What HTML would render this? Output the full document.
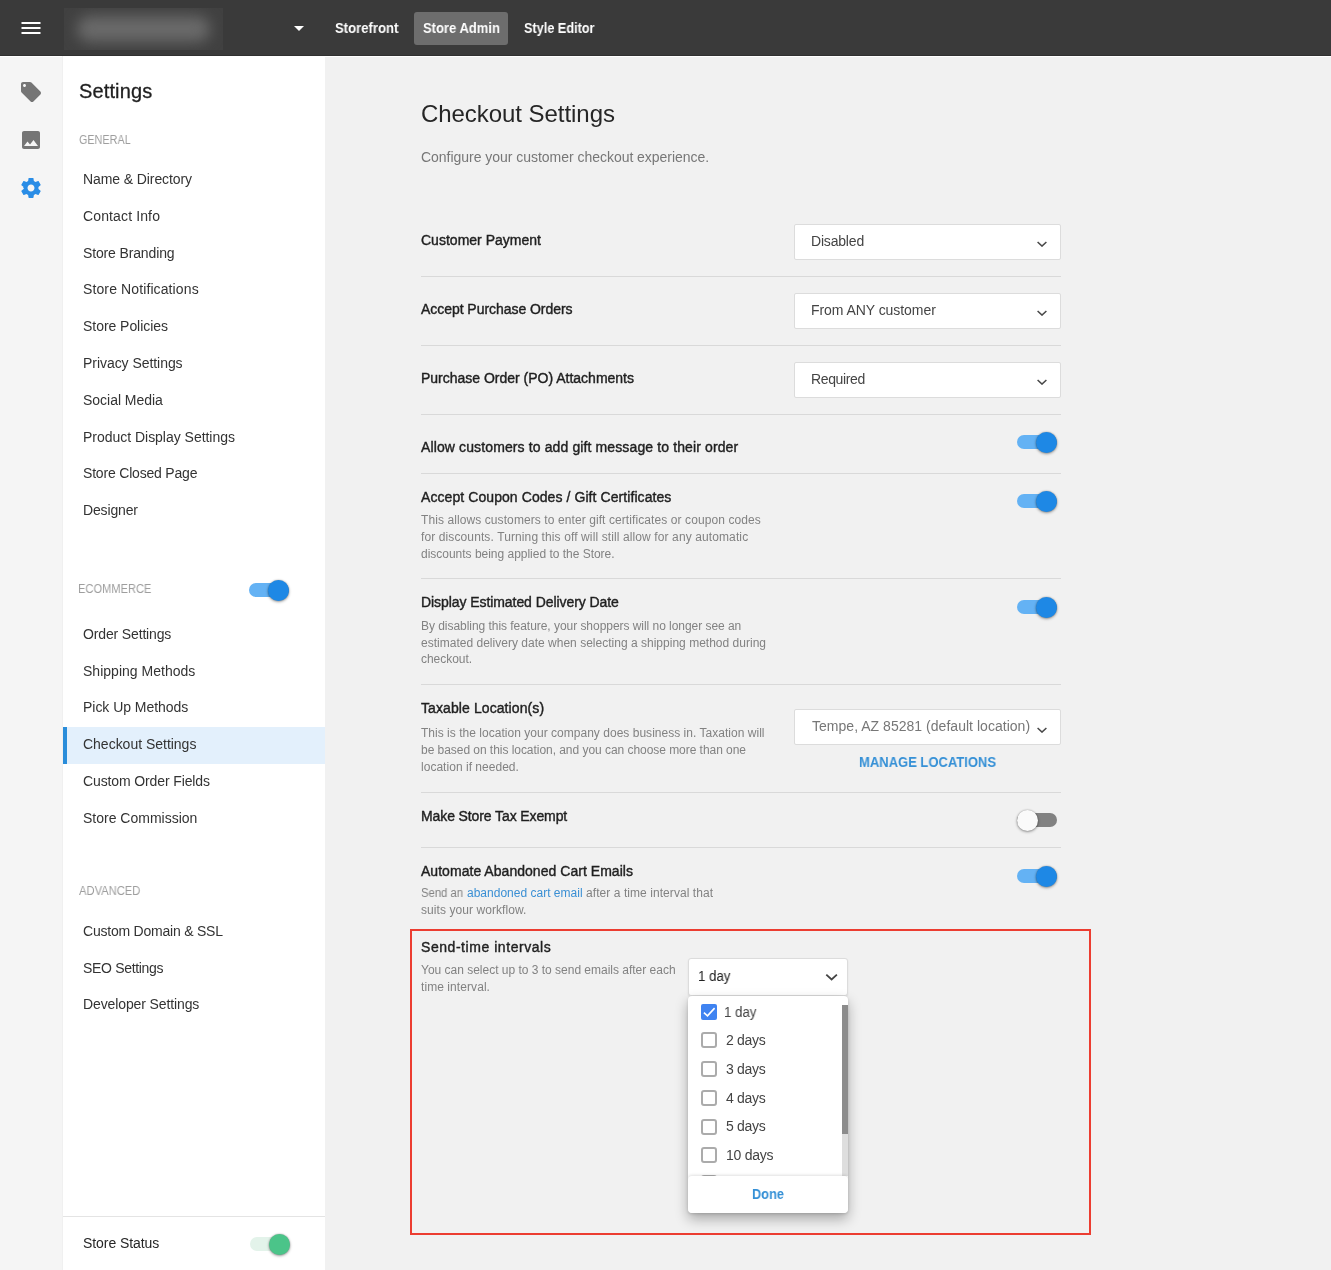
<!DOCTYPE html>
<html lang="en">
<head>
<meta charset="utf-8">
<title>Checkout Settings</title>
<style>
*{box-sizing:border-box;margin:0;padding:0}
html,body{width:1331px;height:1270px;overflow:hidden}
body{position:relative;background:#f1f1f1;font-family:"Liberation Sans",Arial,sans-serif;color:#333}
.abs{position:absolute}
.t{position:absolute;white-space:nowrap;line-height:1;display:block;transform-origin:0 50%;will-change:transform}
/* header */
#hdr{left:0;top:0;width:1331px;height:56px;background:linear-gradient(#3a3a3a 0,#3a3a3a 55px,#303030 55px,#303030 56px)}
#wline{left:0;top:56px;width:1331px;height:1px;background:#fff}
.hb{color:#fff;font-weight:bold}
#adminbtn{left:414px;top:12px;width:94px;height:33px;border-radius:3px;background:#6d6d6d}
#logo{left:64px;top:8px;width:159px;height:42px;background:#414141;overflow:hidden}
#logo i{position:absolute;left:13px;top:8px;width:133px;height:26px;border-radius:13px;background:#696969;filter:blur(7px)}
/* rail + sidebar */
#rail{left:0;top:57px;width:63px;height:1213px;background:#f5f5f5}
#side{left:62px;top:56px;width:263px;height:1214px;background:#fff;border-left:1px solid #f0f0f0}
#active{left:63px;top:727px;width:262px;height:37px;background:#e3f0fc;border-left:4px solid #2a8dda}
#sline{left:63px;top:1216px;width:262px;height:1px;background:#e4e4e4}
.st{color:#1f1f1f;-webkit-text-stroke:.3px #1f1f1f}
.sec{color:#9e9e9e}
.mi{color:#333}
.ss{color:#262626}
/* main */
.h1{color:#262626}
.sub{color:#777}
.lb{color:#1f1f1f;-webkit-text-stroke:.4px #1f1f1f}
.ds{color:#828282}
.ds.a{color:#3a8fd4}
.lnk{color:#3590d6;font-weight:bold}
.sv{color:#444}
.svg{color:#777}
.sv2{color:#222}
.op{color:#444}
.hr{position:absolute;left:421px;width:640px;height:1px;background:#d9d9d9}
.sel{position:absolute;left:794px;width:267px;height:36px;background:#fff;border:1px solid #dcdcdc;border-radius:2px}
.chev{position:absolute;width:10px;height:6px}
/* toggles */
.tg{position:absolute;width:40px;height:20px}
.tg b{position:absolute;left:0;top:3px;width:40px;height:14px;border-radius:7px;background:#64b2f4}
.tg i{position:absolute;left:19px;top:-.5px;width:21px;height:21px;border-radius:50%;background:#1e88e5;box-shadow:0 0 1.5px rgba(0,0,0,.3),0 1px 3px rgba(0,0,0,.38)}
.tg.off b{background:#828282}
.tg.off i{left:-.5px;background:#fafafa}
.tg.grn b{background:#e3f3ea}
.tg.grn i{background:#4bc489}
/* red box */
#red{left:410px;top:929px;width:681px;height:306px;border:2px solid #ec3d31}
/* dropdown */
#dsel{left:688px;top:958px;width:160px;height:38px;background:#fff;border:1px solid #dcdcdc;border-radius:3px;box-shadow:0 1px 2px rgba(0,0,0,.08)}
#panel{left:688px;top:996px;width:160px;height:217px;background:#fff;border-radius:4px;box-shadow:0 6px 13px rgba(0,0,0,.30),0 1px 3px rgba(0,0,0,.14);overflow:hidden}
#strack{left:154px;top:9px;width:6px;height:171px;background:#dedede}
#sthumb{left:154px;top:9px;width:6px;height:129px;background:#8c8c8c}
#pfoot{left:0;top:180px;width:160px;height:37px;background:#fff;border-radius:4px;box-shadow:0 -1px 3px rgba(0,0,0,.12)}
.cb{position:absolute;left:13px;width:16px;height:16px;border:2px solid #ababab;border-radius:3px;background:#fff}
.cb.on{border:none;background:#3f83f1;border-radius:2px}
</style>
</head>
<body>
<div class="abs" id="hdr"></div>
<div class="abs" id="logo"><i></i></div>
<svg class="abs" style="left:19px;top:16px" width="24" height="24" viewBox="0 0 24 24"><path fill="#fff" d="M2.500 5.900h19v2.200h-19zM2.500 10.900h19v2.200h-19zM2.500 15.900h19v2.200h-19z"/></svg>
<svg class="abs" style="left:286.5px;top:16px" width="24" height="24" viewBox="0 0 24 24"><path fill="#fff" d="M7 10l5 5 5-5z"/></svg>
<div class="abs" id="adminbtn"></div>

<div class="abs" id="wline"></div>
<div class="abs" id="rail"></div>
<svg class="abs" style="left:18.600px;top:80px" width="24" height="24" viewBox="0 0 24 24"><path fill="#757575" d="M21.41 11.58l-9-9C12.05 2.22 11.55 2 11 2H4c-1.1 0-2 .9-2 2v7c0 .55.22 1.05.59 1.42l9 9c.36.36.86.58 1.41.58.55 0 1.05-.22 1.41-.59l7-7c.37-.36.59-.86.59-1.41 0-.55-.23-1.06-.59-1.42zM5.5 7C4.67 7 4 6.33 4 5.500S4.67 4 5.5 4 7 4.67 7 5.500 6.330 7 5.500 7z"/></svg>
<svg class="abs" style="left:18.700px;top:128px" width="24" height="24" viewBox="0 0 24 24"><path fill="#757575" d="M21 19V5c0-1.1-.9-2-2-2H5c-1.1 0-2 .9-2 2v14c0 1.1.9 2 2 2h14c1.100 0 2-.9 2-2zM8.500 13.500l2.500 3.010L14.500 12l4.500 6H5l3.500-4.500z"/></svg>
<svg class="abs" style="left:18.600px;top:176px" width="24" height="24" viewBox="0 0 24 24"><path fill="#2a8de6" d="M19.430 12.980c.04-.32.070-.64.070-.98s-.03-.66-.07-.98l2.110-1.650c.19-.15.240-.42.120-.64l-2-3.460c-.12-.22-.39-.3-.61-.22l-2.490 1c-.52-.4-1.080-.73-1.690-.98l-.38-2.650C14.460 2.180 14.250 2 14 2h-4c-.25 0-.46.180-.49.420l-.38 2.650c-.61.250-1.170.59-1.690.98l-2.490-1c-.23-.09-.49 0-.61.220l-2 3.460c-.13.220-.07.490.12.640l2.110 1.650c-.4.320-.7.650-.07.980s.3.660.07.980l-2.110 1.650c-.19.150-.24.420-.12.640l2 3.460c.12.220.39.300.61.220l2.490-1c.52.400 1.080.730 1.690.980l.38 2.650c.3.240.24.420.49.420h4c.25 0 .46-.18.490-.42l.38-2.650c.61-.25 1.170-.59 1.690-.98l2.490 1c.23.090.49 0 .61-.22l2-3.460c.12-.22.070-.49-.12-.64l-2.110-1.650zM12 15.500c-1.930 0-3.500-1.570-3.500-3.500s1.570-3.500 3.500-3.500 3.500 1.570 3.500 3.500-1.570 3.500-3.500 3.500z"/></svg>

<div class="abs" id="side"></div>
<div class="abs" id="active"></div>
<div class="abs" id="sline"></div>
<div class="tg" style="left:249px;top:580px"><b></b><i></i></div>
<div class="tg grn" style="left:249.5px;top:1234px"><b></b><i></i></div>

<!-- main rows -->
<div class="sel" style="top:224px"></div>
<div class="sel" style="top:293px"></div>
<div class="sel" style="top:362px"></div>
<div class="sel" style="top:709px"></div>
<svg class="chev" style="left:1037px;top:241.400px" viewBox="0 0 10 6"><path d="M.6 1L5 5.100 9.400 1" fill="none" stroke="#484848" stroke-width="1.500"/></svg>
<svg class="chev" style="left:1037px;top:310.400px" viewBox="0 0 10 6"><path d="M.6 1L5 5.100 9.400 1" fill="none" stroke="#484848" stroke-width="1.500"/></svg>
<svg class="chev" style="left:1037px;top:379.400px" viewBox="0 0 10 6"><path d="M.6 1L5 5.100 9.400 1" fill="none" stroke="#484848" stroke-width="1.500"/></svg>
<svg class="chev" style="left:1037px;top:726.800px" viewBox="0 0 10 6"><path d="M.6 1L5 5.100 9.400 1" fill="none" stroke="#484848" stroke-width="1.500"/></svg>

<div class="hr" style="top:276px"></div>
<div class="hr" style="top:345px"></div>
<div class="hr" style="top:414px"></div>
<div class="hr" style="top:473px"></div>
<div class="hr" style="top:578px"></div>
<div class="hr" style="top:684px"></div>
<div class="hr" style="top:792px"></div>
<div class="hr" style="top:847px"></div>

<div class="tg" style="left:1017px;top:432px"><b></b><i></i></div>
<div class="tg" style="left:1017px;top:491px"><b></b><i></i></div>
<div class="tg" style="left:1017px;top:597px"><b></b><i></i></div>
<div class="tg off" style="left:1017px;top:810px"><b></b><i></i></div>
<div class="tg" style="left:1017px;top:866px"><b></b><i></i></div>

<div class="abs" id="red"></div>
<div class="abs" id="dsel"></div>
<svg class="abs" style="left:825px;top:973.300px" width="13" height="8" viewBox="0 0 13 8"><path d="M1.300 1.600l5.300 4.900 5.300-4.900" fill="none" stroke="#444" stroke-width="1.800"/></svg>
<div class="abs" id="panel">
  <div class="abs" id="strack"></div>
  <div class="abs" id="sthumb"></div>
  <div class="cb on" style="top:8px"><svg width="16" height="16" viewBox="0 0 16 16" style="display:block"><path d="M2.900 8.700L6.500 11.800L13.600 4.100" fill="none" stroke="#fff" stroke-width="1.600"/></svg></div>
  <div class="cb" style="top:36px"></div>
  <div class="cb" style="top:65px"></div>
  <div class="cb" style="top:94px"></div>
  <div class="cb" style="top:123px"></div>
  <div class="cb" style="top:151px"></div>
  <div class="cb" style="top:179px"></div>
  <div class="abs" id="pfoot"></div>
</div>

<span class="t hb" style="left:334.9px;top:21px;font-size:14px;transform:scaleX(0.9354)">Storefront</span>
<span class="t hb" style="left:422.5px;top:21px;font-size:14px;transform:scaleX(0.9297)">Store Admin</span>
<span class="t hb" style="left:524.0px;top:21px;font-size:14px;transform:scaleX(0.9062)">Style Editor</span>
<span class="t st" style="left:79.4px;top:81px;font-size:20px;letter-spacing:0.125px">Settings</span>
<span class="t sec" style="left:79.4px;top:134px;font-size:12px;letter-spacing:-0.004px;transform:scaleX(0.9000)">GENERAL</span>
<span class="t mi" style="left:83.0px;top:172px;font-size:14px;letter-spacing:-0.095px">Name &amp; Directory</span>
<span class="t mi" style="left:83.0px;top:209px;font-size:14px;letter-spacing:0.130px">Contact Info</span>
<span class="t mi" style="left:83.0px;top:246px;font-size:14px;letter-spacing:-0.141px">Store Branding</span>
<span class="t mi" style="left:83.0px;top:282px;font-size:14px;letter-spacing:0.113px">Store Notifications</span>
<span class="t mi" style="left:83.0px;top:319px;font-size:14px;letter-spacing:-0.044px">Store Policies</span>
<span class="t mi" style="left:83.0px;top:356px;font-size:14px;letter-spacing:-0.050px">Privacy Settings</span>
<span class="t mi" style="left:83.0px;top:393px;font-size:14px;letter-spacing:-0.022px">Social Media</span>
<span class="t mi" style="left:83.0px;top:430px;font-size:14px;letter-spacing:-0.023px">Product Display Settings</span>
<span class="t mi" style="left:83.0px;top:466px;font-size:14px;letter-spacing:-0.190px">Store Closed Page</span>
<span class="t mi" style="left:83.0px;top:503px;font-size:14px;letter-spacing:-0.151px">Designer</span>
<span class="t sec" style="left:78.4px;top:583px;font-size:12px;transform:scaleX(0.9251)">ECOMMERCE</span>
<span class="t mi" style="left:83.0px;top:627px;font-size:14px;letter-spacing:-0.146px">Order Settings</span>
<span class="t mi" style="left:83.0px;top:664px;font-size:14px;letter-spacing:0.014px">Shipping Methods</span>
<span class="t mi" style="left:83.0px;top:700px;font-size:14px;letter-spacing:-0.036px">Pick Up Methods</span>
<span class="t mi" style="left:83.0px;top:737px;font-size:14px;letter-spacing:-0.014px">Checkout Settings</span>
<span class="t mi" style="left:83.0px;top:774px;font-size:14px;letter-spacing:-0.122px">Custom Order Fields</span>
<span class="t mi" style="left:83.0px;top:811px;font-size:14px;letter-spacing:0.002px">Store Commission</span>
<span class="t sec" style="left:79.4px;top:885px;font-size:12px;transform:scaleX(0.9332)">ADVANCED</span>
<span class="t mi" style="left:83.0px;top:924px;font-size:14px;letter-spacing:-0.219px">Custom Domain &amp; SSL</span>
<span class="t mi" style="left:83.0px;top:961px;font-size:14px;letter-spacing:-0.317px">SEO Settings</span>
<span class="t mi" style="left:83.0px;top:997px;font-size:14px;letter-spacing:-0.114px">Developer Settings</span>
<span class="t ss" style="left:83.4px;top:1236px;font-size:14px;letter-spacing:-0.074px">Store Status</span>
<span class="t h1" style="left:421.3px;top:101.5px;font-size:24px;letter-spacing:-0.053px">Checkout Settings</span>
<span class="t sub" style="left:421.0px;top:150px;font-size:14px;letter-spacing:-0.030px">Configure your customer checkout experience.</span>
<span class="t lb" style="left:421.0px;top:233px;font-size:14px;letter-spacing:0.011px">Customer Payment</span>
<span class="t lb" style="left:421.0px;top:302px;font-size:14px;letter-spacing:-0.047px">Accept Purchase Orders</span>
<span class="t lb" style="left:421.0px;top:371px;font-size:14px;letter-spacing:-0.007px">Purchase Order (PO) Attachments</span>
<span class="t lb" style="left:421.0px;top:440px;font-size:14px;letter-spacing:0.120px">Allow customers to add gift message to their order</span>
<span class="t lb" style="left:421.0px;top:490px;font-size:14px;letter-spacing:0.077px">Accept Coupon Codes / Gift Certificates</span>
<span class="t ds" style="left:421.0px;top:514px;font-size:12px;letter-spacing:0.089px">This allows customers to enter gift certificates or coupon codes</span>
<span class="t ds" style="left:421.0px;top:531px;font-size:12px;letter-spacing:0.111px">for discounts. Turning this off will still allow for any automatic</span>
<span class="t ds" style="left:421.0px;top:548px;font-size:12px;letter-spacing:-0.015px">discounts being applied to the Store.</span>
<span class="t lb" style="left:421.0px;top:595px;font-size:14px;letter-spacing:-0.071px">Display Estimated Delivery Date</span>
<span class="t ds" style="left:421.0px;top:620px;font-size:12px;letter-spacing:-0.042px">By disabling this feature, your shoppers will no longer see an</span>
<span class="t ds" style="left:421.0px;top:637px;font-size:12px;letter-spacing:0.013px">estimated delivery date when selecting a shipping method during</span>
<span class="t ds" style="left:421.0px;top:653px;font-size:12px;letter-spacing:-0.044px">checkout.</span>
<span class="t lb" style="left:421.0px;top:701px;font-size:14px;letter-spacing:0.092px">Taxable Location(s)</span>
<span class="t ds" style="left:421.0px;top:727px;font-size:12px;letter-spacing:0.024px">This is the location your company does business in. Taxation will</span>
<span class="t ds" style="left:421.0px;top:744px;font-size:12px;letter-spacing:-0.044px">be based on this location, and you can choose more than one</span>
<span class="t ds" style="left:421.0px;top:761px;font-size:12px;letter-spacing:0.027px">location if needed.</span>
<span class="t lnk" style="left:858.8px;top:755px;font-size:14px;transform:scaleX(0.9287)">MANAGE LOCATIONS</span>
<span class="t lb" style="left:421.0px;top:809px;font-size:14px;letter-spacing:-0.106px">Make Store Tax Exempt</span>
<span class="t lb" style="left:421.0px;top:864px;font-size:14px;letter-spacing:0.037px">Automate Abandoned Cart Emails</span>
<span class="t ds" style="left:421.0px;top:887px;font-size:12px;transform:scaleX(0.9414)">Send an</span>
<span class="t ds a" style="left:467.4px;top:887px;font-size:12px;letter-spacing:0.009px">abandoned cart email</span>
<span class="t ds" style="left:586.4px;top:887px;font-size:12px;letter-spacing:0.067px">after a time interval that</span>
<span class="t ds" style="left:421.0px;top:904px;font-size:12px;letter-spacing:0.069px">suits your workflow.</span>
<span class="t lb" style="left:421.0px;top:940px;font-size:14px;letter-spacing:0.550px">Send-time intervals</span>
<span class="t ds" style="left:421.0px;top:964px;font-size:12px;letter-spacing:-0.010px">You can select up to 3 to send emails after each</span>
<span class="t ds" style="left:421.0px;top:981px;font-size:12px;letter-spacing:0.072px">time interval.</span>
<span class="t sv" style="left:811.4px;top:234px;font-size:14px;letter-spacing:-0.185px">Disabled</span>
<span class="t sv" style="left:811.4px;top:303px;font-size:14px;letter-spacing:-0.059px">From ANY customer</span>
<span class="t sv" style="left:811.4px;top:372px;font-size:14px;letter-spacing:-0.377px">Required</span>
<span class="t svg" style="left:811.6px;top:719px;font-size:14px;letter-spacing:0.029px">Tempe, AZ 85281 (default location)</span>
<span class="t sv2" style="left:698.4px;top:969px;font-size:14px;transform:scaleX(0.9460)">1 day</span>
<span class="t op" style="left:724.4px;top:1005px;font-size:14px;transform:scaleX(0.9460)">1 day</span>
<span class="t op" style="left:725.6px;top:1033px;font-size:14px;letter-spacing:-0.318px">2 days</span>
<span class="t op" style="left:725.6px;top:1062px;font-size:14px;letter-spacing:-0.318px">3 days</span>
<span class="t op" style="left:725.6px;top:1091px;font-size:14px;letter-spacing:-0.318px">4 days</span>
<span class="t op" style="left:725.6px;top:1119px;font-size:14px;letter-spacing:-0.318px">5 days</span>
<span class="t op" style="left:725.6px;top:1148px;font-size:14px;letter-spacing:-0.238px">10 days</span>
<span class="t lnk" style="left:752.3px;top:1187px;font-size:14px;transform:scaleX(0.9114)">Done</span>
</body>
</html>
